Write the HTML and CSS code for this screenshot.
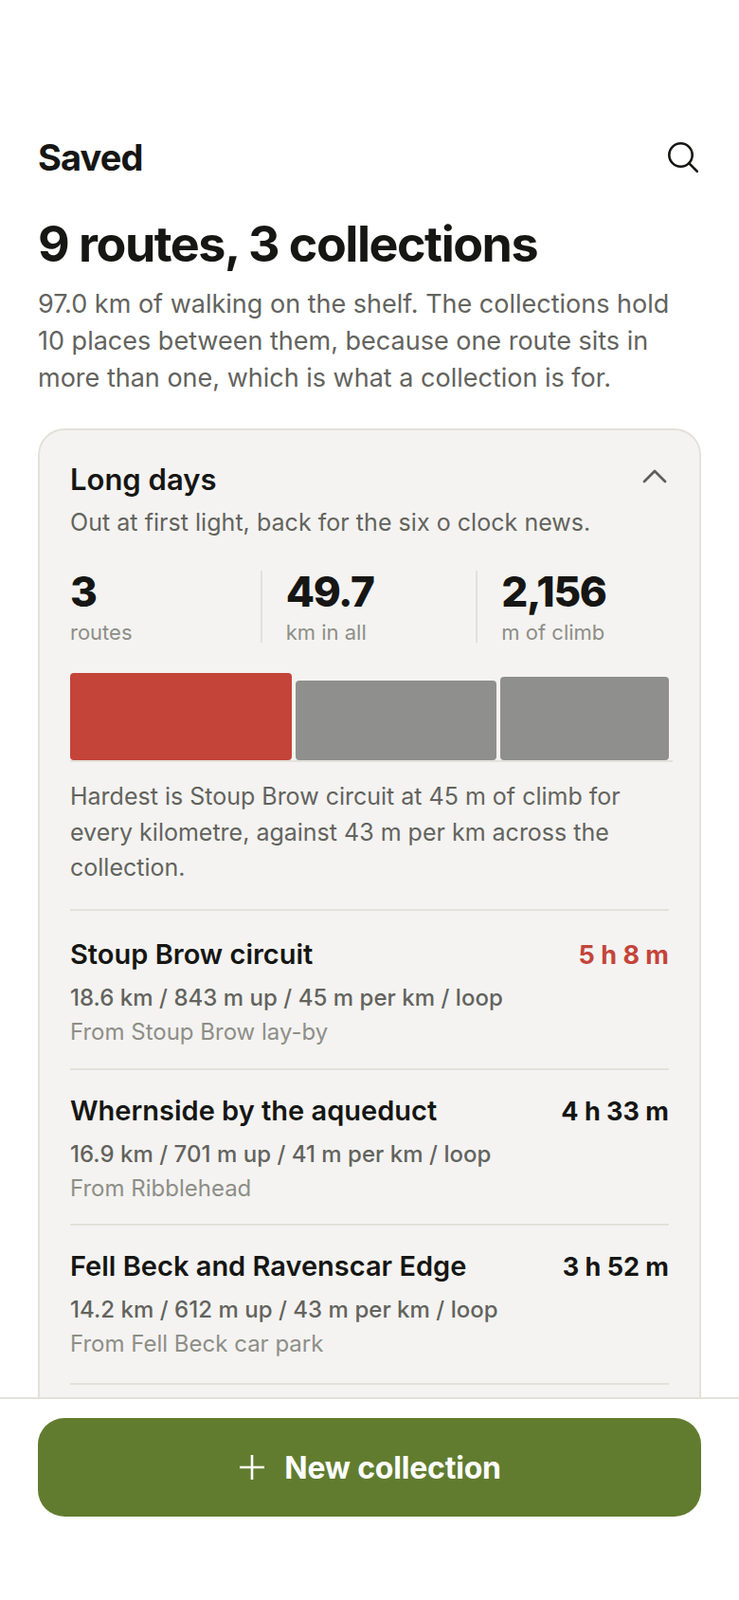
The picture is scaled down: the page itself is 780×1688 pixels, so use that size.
FILE: index.html
```html
<!DOCTYPE html>
<html lang="en">
<head>
<meta charset="utf-8">
<title>Saved</title>
<link rel="stylesheet" href="styles.css">
</head>
<body>
<div class="app">
  <main class="scroll">
    <header class="topbar">
      <h2 class="topbar-title">Saved</h2>
      <svg class="search-icon" viewBox="0 0 32 32" aria-label="Search"><circle cx="13.5" cy="13.5" r="12.2"/><path d="M22.4 22.4 31 31"/></svg>
    </header>
    <h1 class="headline">9 routes, 3 collections</h1>
    <p class="lede">97.0 km of walking on the shelf. The collections hold 10 places between them, because one route sits in more than one, which is what a collection is for.</p>
    <section class="card">
      <div class="card-head">
        <h3 class="card-title">Long days</h3>
        <svg class="chevron" viewBox="0 0 26 16"><path d="M2 14 13 3l11 11"/></svg>
      </div>
      <p class="card-sub">Out at first light, back for the six o clock news.</p>
      <div class="stats">
        <div class="stat"><div class="stat-value">3</div><div class="stat-label">routes</div></div>
        <div class="stat"><div class="stat-value">49.7</div><div class="stat-label">km in all</div></div>
        <div class="stat"><div class="stat-value">2,156</div><div class="stat-label">m of climb</div></div>
      </div>
      <div class="chart">
        <div class="bar bar-hard" style="flex-grow:234;height:92px"></div>
        <div class="bar" style="flex-grow:212;height:84px"></div>
        <div class="bar" style="flex-grow:178;height:88px"></div>
      </div>
      <p class="note">Hardest is Stoup Brow circuit at 45 m of climb for every kilometre, against 43 m per km across the collection.</p>
      <ul class="routes">
        <li class="route">
          <div class="route-top"><span class="route-name">Stoup Brow circuit</span><span class="route-time route-time-hard">5 h 8 m</span></div>
          <div class="route-meta">18.6 km / 843 m up / 45 m per km / loop</div>
          <div class="route-from">From Stoup Brow lay-by</div>
        </li>
        <li class="route">
          <div class="route-top"><span class="route-name">Whernside by the aqueduct</span><span class="route-time">4 h 33 m</span></div>
          <div class="route-meta">16.9 km / 701 m up / 41 m per km / loop</div>
          <div class="route-from">From Ribblehead</div>
        </li>
        <li class="route">
          <div class="route-top"><span class="route-name">Fell Beck and Ravenscar Edge</span><span class="route-time">3 h 52 m</span></div>
          <div class="route-meta">14.2 km / 612 m up / 43 m per km / loop</div>
          <div class="route-from">From Fell Beck car park</div>
        </li>
      </ul>
    </section>
  </main>
  <footer class="footer">
    <button class="cta" type="button">
      <svg class="plus" viewBox="0 0 26 26"><path d="M13 0v26M0 13h26"/></svg>
      <span>New collection</span>
    </button>
  </footer>
</div>
</body>
</html>
```

FILE: styles.css
```css
* { box-sizing: border-box; }
html, body { margin: 0; padding: 0; }
body { background: #fff; font-family: Inter, "Liberation Sans", sans-serif; color: #161614; }
.app { height: 1688px; display: flex; flex-direction: column; overflow: hidden; }
.scroll { flex: 1; min-height: 0; overflow: hidden; padding: 120px 40px 0; }
.topbar { height: 92px; display: flex; align-items: center; justify-content: space-between; }
.topbar-title { margin: 0; font-size: 38px; line-height: 48px; font-weight: 700; letter-spacing: -0.9px; }
.search-icon { width: 32px; height: 32px; margin-right: 3px; fill: none; stroke: #161614; stroke-width: 2.6; stroke-linecap: round; }
.headline { margin: 16px 0 0; font-size: 52px; line-height: 60px; font-weight: 700; letter-spacing: -1.5px; }
.lede { margin: 13px 0 0; font-size: 27px; line-height: 39px; color: #63635e; }
.card { margin-top: 34px; background: #f4f3f1; border: 2px solid #e2e1da; border-radius: 28px; padding: 32px 32px 60px; }
.card-head { display: flex; justify-content: space-between; align-items: flex-start; }
.card-title { margin: 0; font-size: 31px; line-height: 40px; font-weight: 600; }
.chevron { width: 26px; height: 16px; margin: 8px 2px 0 0; fill: none; stroke: #5f5f5a; stroke-width: 2.8; stroke-linecap: round; stroke-linejoin: round; }
.card-sub { margin: 7px 0 0; font-size: 25px; line-height: 36px; letter-spacing: 0.04px; color: #63635e; }
.stats { display: flex; margin-top: 33px; }
.stat { flex: 1; padding: 0 24px 0 25px; border-left: 2px solid #e2e1da; }
.stat:first-child { padding-left: 0; border-left: 0; }
.stat:last-child { padding-right: 0; }
.stat-value { font-size: 44px; line-height: 44px; font-weight: 800; letter-spacing: -1.3px; }
.stat-label { margin-top: 10px; font-size: 22px; line-height: 22px; color: #8e8e88; }
.chart { display: flex; align-items: flex-end; gap: 4px; height: 94px; margin: 32px -4px 0 0; padding-right: 4px; border-bottom: 2px solid #e2e1da; }
.bar { flex: 1 1 0; background: #8f8f8d; border-radius: 4px; }
.bar-hard { background: #c4443a; }
.note { margin: 18px 0 0; font-size: 25px; line-height: 37.5px; color: #63635e; }
.routes { list-style: none; margin: 24px 0 0; padding: 0; border-bottom: 2px solid #e2e1da; }
.route { border-top: 2px solid #e2e1da; padding: 24px 0 20px; }
.route:first-child { padding: 27px 0 21px; }
.route:last-child { padding-bottom: 24px; }
.route-top { height: 38px; display: flex; justify-content: space-between; align-items: baseline; }
.route-name { font-size: 29px; line-height: 38px; font-weight: 600; }
.route-time { font-size: 27px; line-height: 38px; font-weight: 700; }
.route-time-hard { color: #c4443a; }
.route-meta { margin-top: 10px; font-size: 24px; line-height: 34px; font-weight: 500; letter-spacing: 0.03px; color: #63635e; }
.route-from { margin-top: 2px; font-size: 24px; line-height: 34px; color: #8e8e88; }
.footer { flex: none; height: 214px; padding: 20px 40px 0; background: #fff; border-top: 2px solid #e2e1da; }
.cta { width: 100%; height: 104px; display: flex; align-items: center; justify-content: center; gap: 21px; border: 0; border-radius: 28px; padding: 0 0 0 2px; background: #617c2f; color: #fff; font-family: inherit; font-size: 32px; font-weight: 700; letter-spacing: -0.2px; }
.plus { width: 26px; height: 26px; fill: none; stroke: #fff; stroke-width: 2.6; }
```
